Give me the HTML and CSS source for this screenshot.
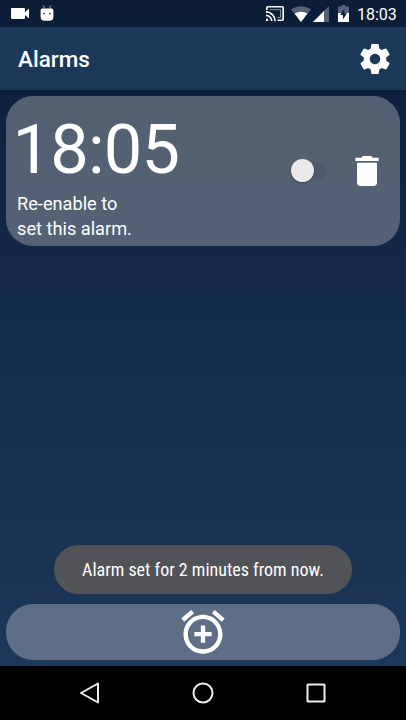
FILE: index.html
```html
<!DOCTYPE html>
<html lang="en">
<head>
<meta charset="utf-8">
<title>Alarms</title>
<link rel="stylesheet" href="styles.css">
</head>
<body>
<div class="screen">
  <header class="status">
    <svg class="video" viewBox="3 6 18 12" preserveAspectRatio="none"><path d="M17 10.500V7c0-.55-.45-1-1-1H4c-.55 0-1 .45-1 1v10c0 .55.45 1 1 1h12c.55 0 1-.45 1-1v-3.500l4 4v-11l-4 4z"/></svg>
    <svg class="robot" viewBox="0 0 14 16"><path d="M3.200.3l1.400 3M10.800.3l-1.400 3" stroke="#aab2c0" stroke-width=".9"/><path d="M.6 6Q.6 3.500 2 3.500h10q1.400 0 1.400 2.500v5.400q0 4.300-4 4.300H4.600q-4 0-4-4.300z"/><circle class="hole" cx="4" cy="8.600" r=".8"/><circle class="hole" cx="10" cy="8.600" r=".8"/></svg>
    <span class="spacer"></span>
    <svg class="cast" viewBox="0 0 18 15"><path d="M.8 4V1.800q0-1 1-1h14.400q1 0 1 1v11.400q0 1-1 1H11.500" fill="none" stroke="#fff" stroke-width="1.600"/><path d="M4 3.700h10.600v7.800h-3.200" fill="none" stroke="#8d97a6" stroke-width="1"/><path d="M0 12.600A2.400 2.400 0 0 1 2.400 15H0z"/><path d="M0 9.400A5.600 5.600 0 0 1 5.600 15M0 5.900A9.100 9.100 0 0 1 9.100 15" fill="none" stroke="#fff" stroke-width="1.600"/></svg>
    <svg class="wifi" viewBox="0 0 20 16"><path class="dim" d="M0 3.300Q10-3 20 3.300L10 16z"/><path d="M3.500 7.600Q10 3.800 16.500 7.600L10 16z"/></svg>
    <svg class="signal" viewBox="0 0 16 16"><path class="dim" d="M16 0v16H0z"/><path d="M11 5v11H0z"/></svg>
    <svg class="battery" viewBox="0 0 11 17"><path class="dim" d="M3.500 0h4v1.600H11V8H0V1.600h3.500z"/><path d="M0 8h11v9H0z"/><path class="hole" d="M6.300 3.500L2.200 10h2.700v4.600L9 8.200H6.300z"/></svg>
    <span class="clock">18:03</span>
  </header>
  <div class="toolbar">
    <h1>Alarms</h1>
    <svg class="gear" viewBox="0 0 24 24"><path d="M19.430 12.980c.04-.32.07-.64.07-.98s-.03-.66-.07-.98l2.110-1.650c.19-.15.24-.42.12-.64l-2-3.460c-.12-.22-.39-.3-.61-.22l-2.490 1c-.52-.4-1.080-.73-1.690-.98l-.38-2.650C14.460 2.180 14.250 2 14 2h-4c-.25 0-.46.18-.49.42l-.38 2.650c-.61.25-1.170.59-1.690.98l-2.490-1c-.23-.09-.49 0-.61.22l-2 3.460c-.13.22-.07.49.12.64l2.110 1.650c-.04.32-.07.65-.07.98s.03.66.07.98l-2.110 1.650c-.19.15-.24.42-.12.64l2 3.460c.12.22.39.3.61.22l2.490-1c.52.4 1.080.73 1.690.98l.38 2.650c.03.24.24.42.49.42h4c.25 0 .46-.18.49-.42l.38-2.650c.61-.25 1.170-.59 1.690-.98l2.490 1c.23.09.49 0 .61-.22l2-3.460c.12-.22.07-.49-.12-.64l-2.110-1.650zM12 15.500c-1.930 0-3.500-1.570-3.500-3.500s1.570-3.500 3.500-3.500 3.500 1.570 3.500 3.500-1.570 3.500-3.500 3.500z"/></svg>
  </div>
  <main class="content">
    <section class="card">
      <div class="info">
        <div class="time">18:05</div>
        <p>Re-enable to<br>set this alarm.</p>
      </div>
      <div class="switch"><div class="knob"></div></div>
      <svg class="trash" viewBox="0 0 24 24"><path d="M6 19c0 1.100.9 2 2 2h8c1.100 0 2-.9 2-2V7H6v12zM19 4h-3.500l-1-1h-5l-1 1H5v2h14V4z"/></svg>
    </section>
    <div class="add">
      <svg viewBox="0 0 24 24"><path d="M7.880 3.390L6.600 1.860 2 5.710l1.290 1.530 4.590-3.850zM22 5.720l-4.600-3.860-1.290 1.530 4.600 3.860L22 5.720zM12 4c-4.970 0-9 4.030-9 9s4.020 9 9 9c4.970 0 9-4.030 9-9s-4.030-9-9-9zm0 16c-3.870 0-7-3.130-7-7s3.130-7 7-7 7 3.130 7 7-3.130 7-7 7zm1-11h-2v3H8v2h3v3h2v-3h3v-2h-3V9z"/></svg>
    </div>
    <div class="toast"><span>Alarm set for 2 minutes from now.</span></div>
  </main>
  <nav class="nav">
    <svg class="back" viewBox="0 0 24 24"><path d="M20 2.500v19L3 12z"/></svg>
    <svg viewBox="0 0 24 24"><circle cx="12" cy="12" r="9.500"/></svg>
    <svg viewBox="0 0 24 24"><rect x="3.500" y="3.500" width="17" height="17" rx=".5"/></svg>
  </nav>
</div>
</body>
</html>
```
FILE: styles.css
```css
* { box-sizing: border-box; }
body {
  margin: 0;
  font-family: Roboto, "Liberation Sans", sans-serif;
  color: #fff;
}
svg { display: block; flex: none; fill: #fff; }
.screen {
  width: 406px;
  height: 720px;
  display: flex;
  flex-direction: column;
  overflow: hidden;
}
.status {
  height: 27px;
  display: flex;
  align-items: center;
  padding: 0 9px 0 11px;
  background: #0c1d38;
}
.spacer { flex: 1; }
.dim { fill: #566176; }
.hole { fill: #0c1d38; }
.video { width: 18px; height: 11px; }
.robot { width: 14px; height: 16px; margin: 0 0 2px 11px; }
.cast { width: 18px; height: 15px; margin-right: 7px; }
.wifi { width: 20px; height: 16px; margin-right: 2px; }
.signal { width: 16px; height: 16px; margin-right: 9px; }
.battery { width: 11px; height: 17px; margin-right: 8px; }
.clock { font-size: 16px; line-height: 27px; padding-top: 1px; font-weight: 450; width: 40px; white-space: nowrap; }
.toolbar {
  height: 63px;
  display: flex;
  align-items: center;
  justify-content: space-between;
  padding: 0 13.500px 0 18px;
  background: #1c3858;
}
h1 { margin: 0; font-size: 22.500px; line-height: 30px; font-weight: 500; }
.gear { width: 36px; height: 36px; }
.content {
  position: relative;
  flex: 1;
  display: flex;
  flex-direction: column;
  justify-content: space-between;
  padding: 6px;
  background: linear-gradient(rgba(0, 0, 20, .2), transparent 5px), linear-gradient(#0f213f, #1c385a);
}
.card {
  height: 149.500px;
  display: flex;
  align-items: center;
  border-radius: 27px;
  padding: 0 13px 0 8px;
  background: linear-gradient(#536071, #556275);
}
.info { flex: 1; height: 100%; padding-top: 14px; }
.time { margin-left: -1.500px; font-size: 68.500px; line-height: 80px; letter-spacing: -.8px; }
.info p { margin: 2px 0 0 3px; font-size: 18.200px; line-height: 24.500px; }
.switch {
  width: 32px;
  height: 16px;
  margin-right: 20.500px;
  border-radius: 8px;
  background: #4e5b6c;
  display: flex;
  align-items: center;
}
.knob {
  flex: none;
  width: 23px;
  height: 23px;
  margin-left: -4px;
  border-radius: 50%;
  background: #ece9ed;
  box-shadow: 0 1px 2px rgba(0, 0, 0, .35);
}
.trash { width: 40px; height: 40px; }
.add {
  height: 56px;
  display: flex;
  justify-content: center;
  align-items: center;
  border-radius: 27px;
  background: #5d6e86;
}
.add svg { width: 52px; height: 52px; }
.toast {
  position: absolute;
  left: 54px;
  top: 454.500px;
  width: 298px;
  height: 49.500px;
  display: flex;
  align-items: center;
  justify-content: center;
  border-radius: 25px;
  background: #525356;
}
.toast span {
  padding-top: 1px;
  font-family: "Roboto Condensed", Roboto, sans-serif;
  font-stretch: 75%;
  font-size: 18px;
  white-space: nowrap;
}
.nav {
  height: 54px;
  display: flex;
  align-items: center;
  justify-content: center;
  gap: 89px;
  background: #000;
}
.nav svg { width: 24px; height: 24px; fill: none; stroke: #eee; stroke-width: 2; stroke-linejoin: round; }
```
